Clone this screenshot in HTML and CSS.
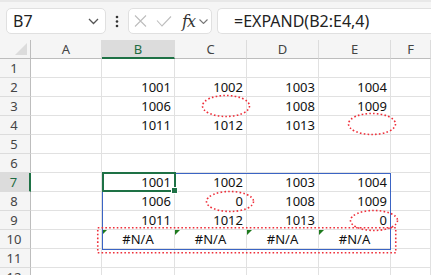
FILE: index.html
```html
<!DOCTYPE html>
<html>
<head>
    <link rel="stylesheet" href="styles.css">
</head>
<body>
    <div class="app">
        <!-- Formula bar -->
        <div class="toolbar">
            <div class="namebox">
                <span class="name">B7</span>
                <svg class="chev" width="11" height="7" viewBox="0 0 11 7"><path d="M1 1l4.5 4.5L10 1" fill="none" stroke="#555" stroke-width="1.3"/></svg>
            </div>
            <div class="grip">
                <svg width="4" height="13" viewBox="0 0 4 13"><circle cx="2" cy="2" r="1.3" fill="#333"/><circle cx="2" cy="6.5" r="1.3" fill="#333"/><circle cx="2" cy="11" r="1.3" fill="#333"/></svg>
            </div>
            <div class="fxbox">
                <svg width="13" height="12" viewBox="0 0 13 12"><path d="M1 0.5l11 11M12 0.5l-11 11" stroke="#bdbdbd" stroke-width="1.1"/></svg>
                <svg width="16" height="11" viewBox="0 0 16 11"><path d="M1 4.5l5 5.5L15 0.5" fill="none" stroke="#bdbdbd" stroke-width="1.1"/></svg>
                <span class="fx">fx</span>
                <svg width="9" height="5" viewBox="0 0 9 5"><path d="M0.5 0.5l4 4 4-4" fill="none" stroke="#777" stroke-width="1.1"/></svg>
            </div>
            <div class="formula">=EXPAND(B2:E4,4)</div>
        </div>

        <!-- Sheet grid -->
        <div class="sheet">
            <div class="h corner"></div><div class="h">A</div><div class="h sel-col">B</div><div class="h">C</div><div class="h">D</div><div class="h">E</div><div class="h">F</div>

            <div class="h rh">1</div><div class="c"></div><div class="c"></div><div class="c"></div><div class="c"></div><div class="c"></div><div class="c"></div>
            <div class="h rh">2</div><div class="c"></div><div class="c">1001</div><div class="c">1002</div><div class="c">1003</div><div class="c">1004</div><div class="c"></div>
            <div class="h rh">3</div><div class="c"></div><div class="c">1006</div><div class="c"></div><div class="c">1008</div><div class="c">1009</div><div class="c"></div>
            <div class="h rh">4</div><div class="c"></div><div class="c">1011</div><div class="c">1012</div><div class="c">1013</div><div class="c"></div><div class="c"></div>
            <div class="h rh">5</div><div class="c"></div><div class="c"></div><div class="c"></div><div class="c"></div><div class="c"></div><div class="c"></div>
            <div class="h rh">6</div><div class="c"></div><div class="c"></div><div class="c"></div><div class="c"></div><div class="c"></div><div class="c"></div>
            <div class="h rh sel-row">7</div><div class="c"></div><div class="c">1001</div><div class="c">1002</div><div class="c">1003</div><div class="c">1004</div><div class="c"></div>
            <div class="h rh">8</div><div class="c"></div><div class="c">1006</div><div class="c">0</div><div class="c">1008</div><div class="c">1009</div><div class="c"></div>
            <div class="h rh">9</div><div class="c"></div><div class="c">1011</div><div class="c">1012</div><div class="c">1013</div><div class="c">0</div><div class="c"></div>
            <div class="h rh">10</div><div class="c"></div><div class="c err">#N/A</div><div class="c err">#N/A</div><div class="c err">#N/A</div><div class="c err">#N/A</div><div class="c"></div>
            <div class="h rh">11</div><div class="c"></div><div class="c"></div><div class="c"></div><div class="c"></div><div class="c"></div><div class="c"></div>
            <div class="h rh">12</div><div class="c"></div><div class="c"></div><div class="c"></div><div class="c"></div><div class="c"></div><div class="c"></div>

            <!-- overlays -->
            <div class="range"></div>
            <div class="active"><span class="handle"></span></div>
            <svg class="marks" width="431" height="235" viewBox="0 0 431 235">
                <ellipse cx="226" cy="66" rx="23.5" ry="10.5"/>
                <ellipse cx="372" cy="84" rx="23.5" ry="10.5"/>
                <ellipse cx="230" cy="161.5" rx="23.5" ry="10"/>
                <ellipse cx="374" cy="180.5" rx="23.5" ry="10"/>
                <rect x="97.75" y="187.75" width="298" height="25"/>
            </svg>
        </div>
    </div>
</body>
</html>
```

FILE: styles.css
```css
body {
    margin: 0;
    background: #ffffff;
    font-family: "Noto Sans", "Open Sans", sans-serif;
    color: #222;
}

.app {
    width: 431px;
    height: 275px;
    overflow: hidden;
}

.toolbar {
    height: 40px;
    box-sizing: border-box;
    background: #f5f5f5;
    border-top: 2px solid #e8e8e8;
    padding: 6px 0 0 6px;
    display: flex;
    align-items: flex-start;
}

.namebox {
    width: 100px;
    height: 26px;
    box-sizing: border-box;
    background: #fff;
    border: 1px solid #e0e0e0;
    border-radius: 5px;
    display: flex;
    align-items: center;
    padding: 0 6px 0 6px;
}

.name {
    flex: 1;
    font-size: 16px;
    color: #222;
}

.grip {
    width: 22px;
    height: 26px;
    display: flex;
    align-items: center;
    justify-content: center;
}

.fxbox {
    width: 84px;
    height: 26px;
    box-sizing: border-box;
    background: #fff;
    border: 1px solid #e0e0e0;
    border-radius: 5px;
    display: flex;
    align-items: center;
    padding-left: 5px;
}

.fxbox svg:nth-child(2) {
    margin-left: 9px;
}

.fx {
    font-family: "DejaVu Serif", "Liberation Serif", serif;
    font-style: italic;
    font-size: 16px;
    color: #333;
    margin-left: 10px;
    letter-spacing: -1px;
}

.fxbox svg:last-child {
    margin-left: 4px;
}

.formula {
    flex: 1;
    height: 26px;
    box-sizing: border-box;
    margin-left: 5px;
    background: #fff;
    border: 1px solid #e0e0e0;
    border-right: none;
    border-radius: 5px 0 0 5px;
    padding-left: 16px;
    font-size: 16px;
    line-height: 24px;
    color: #222;
}

.sheet {
    position: relative;
    display: grid;
    grid-template-columns: 31px 71px 73px 72px 72px 72px 1fr;
    grid-auto-rows: 19px;
    font-size: 13px;
}

.h {
    background: #f5f5f5;
    color: #444;
    text-align: center;
    line-height: 18px;
    border-right: 1px solid #dcdcdc;
    border-bottom: 1px solid #bdbdbd;
    box-sizing: border-box;
}

.h.rh {
    border-right: 1px solid #bdbdbd;
    border-bottom: 1px solid #dcdcdc;
    text-align: center;
    padding-right: 2px;
}

.corner {
    position: relative;
    border-right: 1px solid #bdbdbd;
}

.corner::after {
    content: "";
    position: absolute;
    right: 3px;
    bottom: 3px;
    border-left: 12px solid transparent;
    border-bottom: 12px solid #dcdcdc;
}

.sel-col {
    background: #dcdcdc;
    color: #1e6b41;
    border-bottom: 2px solid #1e7145;
}

.h.sel-row {
    background: #dcdcdc;
    color: #1e6b41;
    border-right: 2px solid #1e7145;
}

.c {
    position: relative;
    border-right: 1px solid #e1e1e1;
    border-bottom: 1px solid #e1e1e1;
    box-sizing: border-box;
    text-align: right;
    padding-right: 3px;
    line-height: 19px;
    color: #111;
}

.c.err {
    text-align: center;
    padding-right: 0;
}

.c.err::before {
    content: "";
    position: absolute;
    left: 0;
    top: 0;
    border-top: 5px solid #1e7a1e;
    border-right: 5px solid transparent;
}

.range {
    position: absolute;
    left: 102px;
    top: 133px;
    width: 289px;
    height: 77px;
    box-sizing: border-box;
    border: 1.5px solid #3b64c4;
}

.active {
    position: absolute;
    left: 102px;
    top: 132px;
    width: 74px;
    height: 20px;
    box-sizing: border-box;
    border: 2px solid #1e7145;
}

.handle {
    position: absolute;
    right: -4px;
    bottom: -4px;
    width: 5px;
    height: 5px;
    background: #1e7145;
    border: 1px solid #fff;
}

.marks {
    position: absolute;
    left: 0;
    top: 0;
    pointer-events: none;
}

.marks ellipse,
.marks rect {
    fill: none;
    stroke: #ee2f3a;
    stroke-width: 1.6;
    stroke-dasharray: 1.6 2.2;
}
```
